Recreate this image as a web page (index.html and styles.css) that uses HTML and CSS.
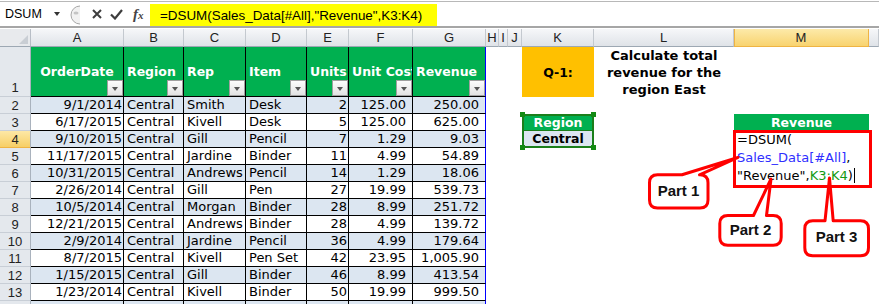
FILE: index.html
```html
<!DOCTYPE html>
<html lang="en">
<head>
    <meta charset="UTF-8">
    <meta name="viewport" content="width=device-width, initial-scale=1.0">
    <title>DSUM - Revenue by Region</title>
    <link rel="stylesheet" href="styles.css">
</head>
<body>

    <div class="formula-bar">
        <div class="name-box">DSUM <span class="drop"></span></div>
        <svg class="grip" width="14" height="24" viewBox="0 0 14 24">
            <path d="M13 4 A8.5 8.5 0 0 0 13 22" fill="#f1f1f1" stroke="#a7a7a7" stroke-width="1"/>
            <ellipse cx="9" cy="11" rx="2.5" ry="1.5" fill="#c4c4c4"/>
        </svg>
        <svg class="icon-x" width="10" height="10" viewBox="0 0 10 10">
            <path d="M1 1 L9 9 M9 1 L1 9" stroke="#3d3d3d" stroke-width="2"/>
        </svg>
        <svg class="icon-ok" width="13" height="11" viewBox="0 0 13 11">
            <path d="M1 5.5 L5 9.5 L12 1" fill="none" stroke="#3d3d3d" stroke-width="2.2"/>
        </svg>
        <span class="fx">f<small>x</small></span>
        <div class="formula">=DSUM(Sales_Data[#All],"Revenue",K3:K4)</div>
    </div>

    <div class="sheet" id="sheet"></div>

    <svg class="callouts" width="879" height="304" viewBox="0 0 879 304">
        <path d="M657.5 174.8 H682 L738 157.5 L699.5 174.8 H700 Q708 174.8 708 182.8 V200 Q708 208 700 208 H657.5 Q649.5 208 649.5 200 V182.8 Q649.5 174.8 657.5 174.8 Z"/>
        <text x="678.5" y="196">Part 1</text>

        <path d="M727.8 215.5 H753.5 L771 179 L766.5 215.5 H773.2 Q781.2 215.5 781.2 223.5 V237.2 Q781.2 245.2 773.2 245.2 H727.8 Q719.8 245.2 719.8 237.2 V223.5 Q719.8 215.5 727.8 215.5 Z"/>
        <text x="750.5" y="235">Part 2</text>

        <path d="M812.8 220.8 H825 L829.5 178 L833.2 220.8 H860.5 Q868.5 220.8 868.5 228.8 V247.8 Q868.5 255.8 860.5 255.8 H812.8 Q804.8 255.8 804.8 247.8 V228.8 Q804.8 220.8 812.8 220.8 Z"/>
        <text x="836.5" y="241.5">Part 3</text>
    </svg>

    <script>
        var data = [
            ['9/1/2014', 'Central', 'Smith', 'Desk', 2, '125.00', '250.00'],
            ['6/17/2015', 'Central', 'Kivell', 'Desk', 5, '125.00', '625.00'],
            ['9/10/2015', 'Central', 'Gill', 'Pencil', 7, '1.29', '9.03'],
            ['11/17/2015', 'Central', 'Jardine', 'Binder', 11, '4.99', '54.89'],
            ['10/31/2015', 'Central', 'Andrews', 'Pencil', 14, '1.29', '18.06'],
            ['2/26/2014', 'Central', 'Gill', 'Pen', 27, '19.99', '539.73'],
            ['10/5/2014', 'Central', 'Morgan', 'Binder', 28, '8.99', '251.72'],
            ['12/21/2015', 'Central', 'Andrews', 'Binder', 28, '4.99', '139.72'],
            ['2/9/2014', 'Central', 'Jardine', 'Pencil', 36, '4.99', '179.64'],
            ['8/7/2015', 'Central', 'Kivell', 'Pen Set', 42, '23.95', '1,005.90'],
            ['1/15/2015', 'Central', 'Gill', 'Binder', 46, '8.99', '413.54'],
            ['1/23/2014', 'Central', 'Kivell', 'Binder', 50, '19.99', '999.50'],
            ['', '', '', '', '', '', '']
        ];

        var sheet = document.getElementById('sheet');

        function add(cls, html) {
            var d = document.createElement('div');
            d.className = 'cell ' + cls;
            if (html !== undefined) d.innerHTML = html;
            sheet.appendChild(d);
            return d;
        }

        // column letters
        add('corner');
        'ABCDEFGHIJKLM'.split('').forEach(function(c) {
            add('col' + (c === 'M' ? ' hl' : ''), c);
        });
        add('col');

        // row 1: table headers + question
        add('rh bottom', '1');
        ['OrderDate', 'Region', 'Rep', 'Item', 'Units', 'Unit Cost', 'Revenue'].forEach(function(h, i) {
            var cls = 'th' + (i === 0 ? ' center' : '') + (i === 6 ? ' edge' : '');
            add(cls, '<span>' + h + '</span><i class="filter"></i>');
        });
        add(''); add(''); add('');
        add('question', 'Q-1:');
        add('task', 'Calculate total<br>revenue for the<br>region East');
        add(''); add('');

        var editor = '<div class="editor">=DSUM(<br><span class="ref-blue">Sales_Data[#All]</span>,<br>' +
            '"Revenue",<span class="ref-green">K3:K4</span>)<span class="caret"></span></div>';

        data.forEach(function(r, i) {
            var n = i + 2;
            var band = n % 2 === 0 ? ' band' : '';
            add('rh' + (n === 4 ? ' hl' : ''), n);
            add('td num' + band, r[0]);
            add('td' + band, r[1]);
            add('td' + band, r[2]);
            add('td' + band, r[3]);
            add('td num' + band, r[4]);
            add('td num pad' + band, r[5]);
            add('td num pad edge' + band, r[6]);
            add(''); add(''); add('');
            if (n === 3) add('crit-head', 'Region');
            else if (n === 4) add('crit', 'Central');
            else add('');
            add('');
            if (n === 3) add('out-head', 'Revenue');
            else if (n === 4) add('editor-cell', editor);
            else add('');
            add('');
        });
    </script>
</body>
</html>
```

FILE: styles.css
```css
body {
    margin: 0;
    width: 879px;
    height: 304px;
    overflow: hidden;
    position: relative;
    background: #fff;
    color: #000;
    font-family: "DejaVu Sans", Verdana, sans-serif;
}

/* formula bar */
.formula-bar {
    display: flex;
    align-items: center;
    height: 24px;
    margin-top: 1px;
    border-top: 1px solid #b8b8b8;
    border-bottom: 2px solid #a6a6a6;
}

.name-box {
    width: 55px;
    padding: 0 5px;
    display: flex;
    align-items: center;
    justify-content: space-between;
    font-family: "Liberation Sans", Arial, sans-serif;
    font-size: 12.5px;
}

.drop {
    border-left: 3.5px solid transparent;
    border-right: 3.5px solid transparent;
    border-top: 4px solid #333;
}

.grip {
    margin-left: 2px;
}

.icon-x {
    margin-left: 11px;
}

.icon-ok {
    margin-left: 8px;
}

.fx {
    width: 17px;
    margin-left: 10px;
    font-family: "Liberation Serif", serif;
    font-style: italic;
    font-weight: bold;
    font-size: 15px;
    color: #444;
}

.fx small {
    font-size: 11px;
}

.formula {
    align-self: stretch;
    margin-top: 2px;
    width: 277px;
    padding-left: 10px;
    display: flex;
    align-items: center;
    background: #ffff00;
    font-family: "Liberation Sans", Arial, sans-serif;
    font-size: 13.4px;
    white-space: nowrap;
}

/* worksheet grid */
.sheet {
    display: grid;
    grid-template-columns: 31px 93px 60px 62px 61px 42px 64px 73px 13px 9px 14px 72px 140px 135px 10px;
    grid-template-rows: 18px 50px repeat(13, 17px);
    margin-top: 1px;
}

.cell {
    box-sizing: border-box;
    overflow: hidden;
    white-space: nowrap;
}

.corner {
    position: relative;
    background: #e8eaed;
    border-right: 1px solid #b8bec6;
    border-bottom: 1px solid #9da8b3;
}

.corner::after {
    content: '';
    position: absolute;
    right: 2px;
    bottom: 2px;
    border-left: 9px solid transparent;
    border-bottom: 9px solid #c9ced4;
}

.col {
    display: flex;
    align-items: center;
    justify-content: center;
    font-family: "Liberation Sans", Arial, sans-serif;
    font-size: 13px;
    color: #222;
    background: linear-gradient(#f6f7f9, #dfe3e8);
    border-right: 1px solid #c4c9cf;
    border-bottom: 1px solid #9da8b3;
}

.col.hl {
    background: linear-gradient(#fdeaa9, #f8d36f);
    border-right-color: #efb443;
    border-bottom-color: #efb443;
    box-shadow: inset 1px 0 0 #efb443;
}

.rh {
    display: flex;
    align-items: center;
    justify-content: center;
    font-family: "Liberation Sans", Arial, sans-serif;
    font-size: 13px;
    color: #222;
    background: #e4e8ed;
    border-right: 1px solid #a9b2bd;
    border-bottom: 1px solid #c8ced6;
}

.rh.bottom {
    align-items: flex-end;
    padding-bottom: 1px;
}

.rh.hl {
    background: linear-gradient(#fde8a6, #f7cf66);
    border-bottom-color: #efb443;
}

/* data table */
.th {
    position: relative;
    display: flex;
    align-items: center;
    padding-left: 3px;
    background: #00b050;
    color: #fff;
    font-weight: bold;
    font-size: 12.5px;
    border-right: 1px solid #000;
    border-bottom: 1px solid #000;
}

.th.center {
    justify-content: center;
    padding-left: 0;
}

.filter {
    position: absolute;
    right: 0;
    bottom: 0;
    width: 16px;
    height: 16px;
    box-sizing: border-box;
    border: 1px solid #a0a0a0;
    background: linear-gradient(#fdfdfd, #e2e2e2);
}

.filter::after {
    content: '';
    position: absolute;
    left: 4px;
    top: 6px;
    border-left: 3.5px solid transparent;
    border-right: 3.5px solid transparent;
    border-top: 4px solid #555;
}

.td {
    padding: 0 3px;
    font-size: 13px;
    line-height: 16px;
    border-right: 1px solid #000;
    border-bottom: 1px solid #000;
}

.td.num {
    text-align: right;
    padding-right: 1px;
}

.td.pad {
    padding-right: 6px;
}

.band {
    background: #dce6f1;
}

.edge {
    border-right-color: #0000ff;
}

/* task area */
.question {
    display: flex;
    align-items: center;
    justify-content: center;
    background: #ffc000;
    font-weight: bold;
    font-size: 12.5px;
}

.task {
    display: flex;
    align-items: center;
    justify-content: center;
    text-align: center;
    font-weight: bold;
    font-size: 13px;
    line-height: 17px;
}

.crit-head,
.crit {
    position: relative;
    overflow: visible;
    z-index: 1;
    text-align: center;
    font-weight: bold;
    font-size: 12.5px;
    border: 2px solid #1b7f1b;
}

.crit-head {
    background: #00b050;
    color: #fff;
    line-height: 14px;
    border-bottom-width: 1px;
}

.crit {
    background: #dce6f1;
    line-height: 15px;
    border-top: 0;
}

.crit-head::before,
.crit-head::after,
.crit::before,
.crit::after {
    content: '';
    position: absolute;
    width: 5px;
    height: 5px;
    background: #138a13;
}

.crit-head::before { top: -4px; left: -4px; }
.crit-head::after { top: -4px; right: -4px; }
.crit::before { bottom: -4px; left: -4px; }
.crit::after { bottom: -4px; right: -4px; }

.out-head {
    background: #00b050;
    color: #fff;
    text-align: center;
    font-weight: bold;
    font-size: 12.5px;
    line-height: 17px;
}

.editor-cell {
    position: relative;
    overflow: visible;
    z-index: 2;
}

.editor {
    position: absolute;
    top: -1px;
    left: -1px;
    width: 139px;
    height: 58px;
    box-sizing: border-box;
    padding: 1px 0 0 4px;
    background: #fff;
    font-size: 13px;
    line-height: 18px;
}

.editor::after {
    content: '';
    position: absolute;
    top: 0;
    left: 0;
    right: 0;
    bottom: 0;
    border: 3px solid #ff0000;
}

.ref-blue {
    color: #2f2fff;
}

.ref-green {
    color: #129a12;
}

.caret {
    display: inline-block;
    width: 1px;
    height: 15px;
    margin-left: 1px;
    vertical-align: -3px;
    background: #000;
}

/* callouts */
.callouts {
    position: absolute;
    top: 0;
    left: 0;
    z-index: 5;
    pointer-events: none;
}

.callouts path {
    fill: #fff;
    stroke: #ff0000;
    stroke-width: 3;
    stroke-linejoin: round;
}

.callouts text {
    font-family: "Liberation Sans", Arial, sans-serif;
    font-weight: bold;
    font-size: 15px;
    text-anchor: middle;
    fill: #111;
}
```
